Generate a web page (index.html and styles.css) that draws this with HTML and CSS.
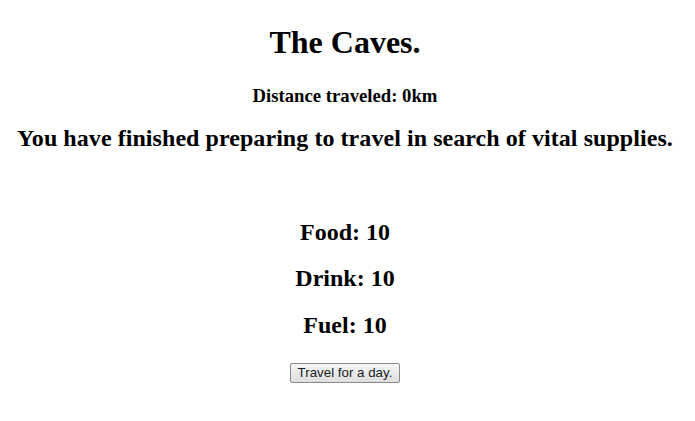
FILE: index.html
```html
<!DOCTYPE html>
<html>
<head>
<meta charset="utf-8">
<link rel="stylesheet" href="styles.css">
</head>
<body>
<div class="game">
  <h1 class="title">The Caves.</h1>
  <h3 class="distance">Distance traveled: 0km</h3>
  <h2 class="message">You have finished preparing to travel in search of vital supplies.</h2>
  <div class="stats">
    <h2 class="stat">Food: 10</h2>
    <h2 class="stat">Drink: 10</h2>
    <h2 class="stat">Fuel: 10</h2>
  </div>
  <button class="travel">Travel for a day.</button>
</div>
</body>
</html>
```

FILE: styles.css
```css
html, body {
  background: #ffffff;
}
body {
  margin: 0 8px;
  font-family: "Liberation Serif", "Times New Roman", serif;
  color: #000;
}
.game {
  display: flex;
  flex-direction: column;
  align-items: center;
  text-align: center;
  padding: 23.5px 5px 0 0;
}
.title {
  font-size: 32px;
  line-height: 36px;
  margin: 0;
}
.distance {
  font-size: 18.72px;
  line-height: 22px;
  margin: 25.2px 0 0;
}
.message {
  font-size: 24px;
  line-height: 27px;
  letter-spacing: 0.06px;
  margin: 18.4px 0 0;
}
.stats {
  display: flex;
  flex-direction: column;
  align-items: center;
  gap: 19.3px;
  margin-top: 67px;
}
.stat {
  font-size: 24px;
  line-height: 27px;
  margin: 0;
}
.travel {
  margin-top: 24.3px;
  font-family: "Liberation Sans", Arial, sans-serif;
  font-size: 13.33px;
  line-height: 16px;
  color: #1a1a1a;
  padding: 1px 7px;
  border: 1px solid #8a8a8a;
  border-radius: 2px;
  background: linear-gradient(#f6f6f6, #dedede);
}
```
